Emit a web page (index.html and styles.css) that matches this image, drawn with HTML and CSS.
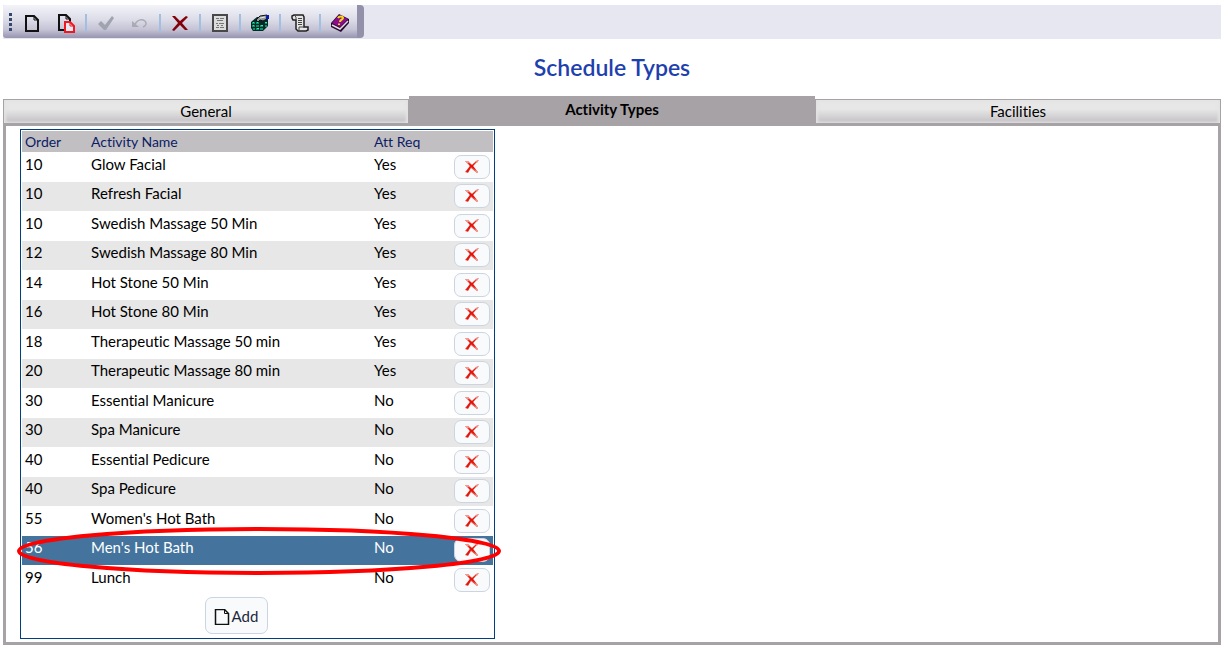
FILE: index.html
```html
<!DOCTYPE html>
<html lang="en">
<head>
    <meta charset="utf-8">
    <title>Schedule Types</title>
    <link rel="stylesheet" href="styles.css">
</head>
<body>
    <!-- shared icons -->
    <svg class="icon-defs" width="0" height="0" aria-hidden="true">
        <symbol id="icon-cross" viewBox="0 0 16 14">
            <path d="M1 1L4 1L8 5L12 1L15 0L9 6L14 12L13 13L7 8L4 13L1 12L6 6Z" fill="#f0483e"/>
            <path d="M4 3L8 5L12 2L9 6L12 10L7 7L4 12L2 12L6 6Z" fill="#e01408"/>
            <path d="M1 1L4 1L5 3L3 3ZM12 1L15 0L13 3ZM12 10L14 12L13 13L11 11Z" fill="#f4978e"/>
        </symbol>
    </svg>

    <div class="toolbar">
        <div class="tools">
            <span class="grip"></span>
            <button class="tool" type="button" aria-label="New">
                <svg width="16" height="18" viewBox="0 0 16 18">
                    <path d="M2 2h8l4 4v11H2z" fill="none" stroke="#111" stroke-width="2"/>
                    <path d="M10 2v4h4" fill="none" stroke="#111"/>
                </svg>
            </button>
            <button class="tool" type="button" aria-label="Copy">
                <svg width="18" height="20" viewBox="0 0 18 20">
                    <path d="M7 17H2V2h7l4 4v3" fill="none" stroke="#111" stroke-width="2"/>
                    <path d="M9 2v4h4" fill="none" stroke="#111"/>
                    <path d="M8 9h5l4 4v6H8z" fill="#e8e8f0" stroke="#f01820" stroke-width="2"/>
                    <path d="M13 9v4h4" fill="none" stroke="#f01820"/>
                </svg>
            </button>
            <span class="divider"></span>
            <button class="tool" type="button" aria-label="Save" disabled>
                <svg width="18" height="16" viewBox="0 0 18 16"><path d="M1 9l3-3 4 4 7-9 2 2-8 12H7z" fill="#a0a4ae"/></svg>
            </button>
            <button class="tool" type="button" aria-label="Undo" disabled>
                <svg width="18" height="12" viewBox="0 0 18 12">
                    <path d="M4 7c3-5 7-5 10-3 2 2 1 5-2 6" fill="none" stroke="#aaaab2" stroke-width="1.5"/>
                    <path d="M1 4v6h7z" fill="#aaaab2"/>
                </svg>
            </button>
            <span class="divider"></span>
            <button class="tool" type="button" aria-label="Delete">
                <svg width="18" height="18" viewBox="0 0 18 18"><path d="M1 2h3l5 5 6-5 2 1-6 6 6 7h-3l-5-5-6 6-2-1 6-7z" fill="#820008"/></svg>
            </button>
            <span class="divider"></span>
            <button class="tool" type="button" aria-label="Details">
                <svg width="16" height="18" viewBox="0 0 16 18">
                    <path d="M1 1h14v16H1z" fill="#dcdcdc" stroke="#484848" stroke-width="2"/>
                    <path d="M4 4.5h3M8 4.5h4M5 6.5h6M4 9.5h2M7 9.5h5M5 11.5h2M9 11.5h2M4 13.5h3M8 13.5h4" stroke="#777"/>
                </svg>
            </button>
            <span class="divider"></span>
            <button class="tool" type="button" aria-label="Export data">
                <svg width="20" height="18" viewBox="0 0 20 18">
                    <path d="M1 8l6-5h9l2 2v7l-5 5H3l-2-3z" fill="#042a26"/>
                    <path d="M2 8h3v2H2zM6 8h3v2H6zM2 11h3v2H2zM6 11h3v2H6zM10 11h3v2h-3zM3 14h2v2H3zM6 14h3v2H6zM10 14h3v2h-3zM15 8h2v2h-2zM15 11h2v2h-2z" fill="#089068"/>
                    <path d="M3 8h1v1H3zM7 8h1v1H7zM3 11h1v1H3zM11 11h2v1h-2zM7 14h2v1H7zM15 8h2v1h-2z" fill="#30e8c0"/>
                    <path d="M6 6l4-4 7-1v4l-4 2-3-1-2 2z" fill="#909a9c" stroke="#111"/>
                    <path d="M17 1h2v4h-3V3z" fill="#0818b8"/>
                    <path d="M10 4l5-1" stroke="#eee"/>
                </svg>
            </button>
            <span class="divider"></span>
            <button class="tool" type="button" aria-label="Log">
                <svg width="18" height="18" viewBox="0 0 18 18">
                    <path d="M3 1h9l1 2v10h4v3l-2 1H7l-2-2V6H2L1 4V2z" fill="#e6e6e6" stroke="#222" stroke-width="1.5"/>
                    <path d="M3 1l2 2v3M13 13H8v3l-1 1M7 4.5h4M7 6.5h4M7 8.5h4M7 10.5h4" fill="none" stroke="#444"/>
                </svg>
            </button>
            <span class="divider"></span>
            <button class="tool" type="button" aria-label="Help">
                <svg width="20" height="20" viewBox="0 0 20 20">
                    <path d="M1 10L9 1l10 5v4l-8 9-10-5z" fill="#2a0830"/>
                    <path d="M2 10L9 2l9 4-8 8z" fill="#8c0c8c"/>
                    <path d="M2 12l8 4 8-8" fill="none" stroke="#e4dce4" stroke-width="1.5"/>
                    <path d="M8 5c1-2 5-2 5 0s-3 1-3 4M9 10.500v1.500" fill="none" stroke="#f4d818" stroke-width="2"/>
                </svg>
            </button>
        </div>
    </div>

    <h1>Schedule Types</h1>

    <nav class="tabs">
        <a class="tab" href="#general">General</a>
        <a class="tab active" href="#activity">Activity Types</a>
        <a class="tab" href="#facilities">Facilities</a>
    </nav>

    <main class="panel" id="activity">
        <form class="activity-box">
            <table class="activities">
                <thead>
                    <tr><th class="order">Order</th><th class="name">Activity Name</th><th>Att Req</th><th class="remove"></th></tr>
                </thead>
                <tbody>
                    <tr><td>10</td><td>Glow Facial</td><td>Yes</td><td><button class="delete" type="button" aria-label="Delete Glow Facial"><svg width="16" height="14"><use href="#icon-cross"/></svg></button></td></tr>
                    <tr><td>10</td><td>Refresh Facial</td><td>Yes</td><td><button class="delete" type="button" aria-label="Delete Refresh Facial"><svg width="16" height="14"><use href="#icon-cross"/></svg></button></td></tr>
                    <tr><td>10</td><td>Swedish Massage 50 Min</td><td>Yes</td><td><button class="delete" type="button" aria-label="Delete Swedish Massage 50 Min"><svg width="16" height="14"><use href="#icon-cross"/></svg></button></td></tr>
                    <tr><td>12</td><td>Swedish Massage 80 Min</td><td>Yes</td><td><button class="delete" type="button" aria-label="Delete Swedish Massage 80 Min"><svg width="16" height="14"><use href="#icon-cross"/></svg></button></td></tr>
                    <tr><td>14</td><td>Hot Stone 50 Min</td><td>Yes</td><td><button class="delete" type="button" aria-label="Delete Hot Stone 50 Min"><svg width="16" height="14"><use href="#icon-cross"/></svg></button></td></tr>
                    <tr><td>16</td><td>Hot Stone 80 Min</td><td>Yes</td><td><button class="delete" type="button" aria-label="Delete Hot Stone 80 Min"><svg width="16" height="14"><use href="#icon-cross"/></svg></button></td></tr>
                    <tr><td>18</td><td>Therapeutic Massage 50 min</td><td>Yes</td><td><button class="delete" type="button" aria-label="Delete Therapeutic Massage 50 min"><svg width="16" height="14"><use href="#icon-cross"/></svg></button></td></tr>
                    <tr><td>20</td><td>Therapeutic Massage 80 min</td><td>Yes</td><td><button class="delete" type="button" aria-label="Delete Therapeutic Massage 80 min"><svg width="16" height="14"><use href="#icon-cross"/></svg></button></td></tr>
                    <tr><td>30</td><td>Essential Manicure</td><td>No</td><td><button class="delete" type="button" aria-label="Delete Essential Manicure"><svg width="16" height="14"><use href="#icon-cross"/></svg></button></td></tr>
                    <tr><td>30</td><td>Spa Manicure</td><td>No</td><td><button class="delete" type="button" aria-label="Delete Spa Manicure"><svg width="16" height="14"><use href="#icon-cross"/></svg></button></td></tr>
                    <tr><td>40</td><td>Essential Pedicure</td><td>No</td><td><button class="delete" type="button" aria-label="Delete Essential Pedicure"><svg width="16" height="14"><use href="#icon-cross"/></svg></button></td></tr>
                    <tr><td>40</td><td>Spa Pedicure</td><td>No</td><td><button class="delete" type="button" aria-label="Delete Spa Pedicure"><svg width="16" height="14"><use href="#icon-cross"/></svg></button></td></tr>
                    <tr><td>55</td><td>Women's Hot Bath</td><td>No</td><td><button class="delete" type="button" aria-label="Delete Women's Hot Bath"><svg width="16" height="14"><use href="#icon-cross"/></svg></button></td></tr>
                    <tr class="selected">
                        <td>56</td><td>Men's Hot Bath</td><td>No</td>
                        <td>
                            <button class="delete" type="button" aria-label="Delete Men's Hot Bath"><svg width="16" height="14"><use href="#icon-cross"/></svg></button>
                            <svg class="marker" viewBox="0 0 485 48" preserveAspectRatio="none" aria-hidden="true"><ellipse cx="242" cy="24" rx="240" ry="22" fill="none" stroke="#ff0000" stroke-width="4"/></svg>
                        </td>
                    </tr>
                    <tr><td>99</td><td>Lunch</td><td>No</td><td><button class="delete" type="button" aria-label="Delete Lunch"><svg width="16" height="14"><use href="#icon-cross"/></svg></button></td></tr>
                </tbody>
                <tfoot>
                    <tr>
                        <td colspan="3">
                            <button class="add" type="button">
                                <svg width="16" height="16" viewBox="0 0 16 16">
                                    <path d="M1.500 .5h9l4 4v11h-13z" fill="none" stroke="#111" stroke-width="1.500"/>
                                    <path d="M10.500 .5v4h4" fill="none" stroke="#111"/>
                                </svg>
                                Add
                            </button>
                        </td>
                        <td></td>
                    </tr>
                </tfoot>
            </table>
        </form>
    </main>
</body>
</html>
```

FILE: styles.css
```css
* {
    box-sizing: border-box;
}

body {
    margin: 5px 1px 6px 3px;
    font-family: Lato, sans-serif;
    font-size: 15px;
    font-variant-ligatures: none;
    line-height: 20px;
    color: #000;
    background-color: #fff;
}

.icon-defs {
    position: absolute;
}

svg {
    display: block;
}

/* Toolbar */
.toolbar {
    display: flex;
    height: 34px;
    background-color: #e7e7f1;
}

.tools {
    display: flex;
    align-items: center;
    height: 33px;
    padding-left: 6px;
    border-right: 7px solid #9390aa;
    border-radius: 3px 4px 4px 3px;
    background: linear-gradient(#f3f3f9, #dcdce8 45%, #c4c2d4 75%, #9694b0);
}

.grip {
    width: 3px;
    height: 18px;
    margin-right: 3px;
    background: repeating-linear-gradient(#34486e 0 3px, transparent 3px 5px);
}

.tool {
    display: flex;
    align-items: center;
    justify-content: center;
    width: 34px;
    height: 30px;
    padding: 2px 0 0;
    border: none;
    background: none;
}

.divider {
    width: 2px;
    height: 18px;
    margin: 2px 2px 0;
    background-color: #a2bfe2;
}

h1 {
    margin: 12px 0 13px;
    font-size: 23px;
    line-height: 32px;
    font-weight: 600;
    text-align: center;
    color: #1e40af;
}

/* Tabs */
.tabs {
    display: flex;
    align-items: flex-end;
}

.tab {
    flex: 1;
    height: 24px;
    border: 1px solid #a7a2a5;
    border-bottom: none;
    background: linear-gradient(#e7e7e7 40%, #cbc9cc 85%);
    box-shadow: inset 2px 0 3px #e3e3e3, inset -2px 0 3px #e3e3e3;
    line-height: 23px;
    text-align: center;
    text-decoration: none;
    color: #000;
}

.tab.active {
    height: 27px;
    background: #a7a2a5;
    box-shadow: none;
    font-weight: bold;
    line-height: 25px;
}

.panel {
    padding: 3px 14px;
    border: 3px solid #a7a2a5;
}

/* Activity list */
.activity-box {
    width: 475px;
    max-width: 100%;
    padding: 1px 1px 4px;
    border: 1px solid #004080;
}

.activities {
    width: 100%;
    border-collapse: collapse;
    table-layout: fixed;
}

.activities th {
    height: 21px;
    padding: 0 3px;
    background-color: #c2bfc2;
    font-size: 14px;
    font-weight: normal;
    text-align: left;
    color: #0c1c66;
}

.activities .order {
    width: 66px;
}

.activities .name {
    width: 283px;
}

.activities .remove {
    width: 42px;
}

.activities td {
    height: 30px;
    padding: 2px 3px 0;
    vertical-align: top;
}

.activities tbody tr:nth-child(even) td {
    height: 29px;
    padding-top: 1px;
    background-color: #e7e7e7;
}

.activities .selected {
    position: relative;
}

.activities tbody .selected:nth-child(even) td {
    background-color: #44749d;
    color: #fff;
}

/* Ring drawn around the selected row */
.marker {
    position: absolute;
    top: -9px;
    left: -5px;
    width: calc(100% + 14px);
    height: 48px;
    pointer-events: none;
}

.delete,
.add {
    display: flex;
    align-items: center;
    justify-content: center;
    border: 1px solid #cbd5e1;
    border-radius: 7px;
    background-color: #f8fafc;
}

.delete {
    width: 36px;
    height: 24px;
    margin-top: 1px;
    padding: 0 0 1px;
}

.add {
    gap: 2px;
    height: 37px;
    margin: 0 auto;
    padding: 0 9px 0 8px;
    font: inherit;
    color: #1e293b;
}

.add svg {
    margin-top: 2px;
}
```
